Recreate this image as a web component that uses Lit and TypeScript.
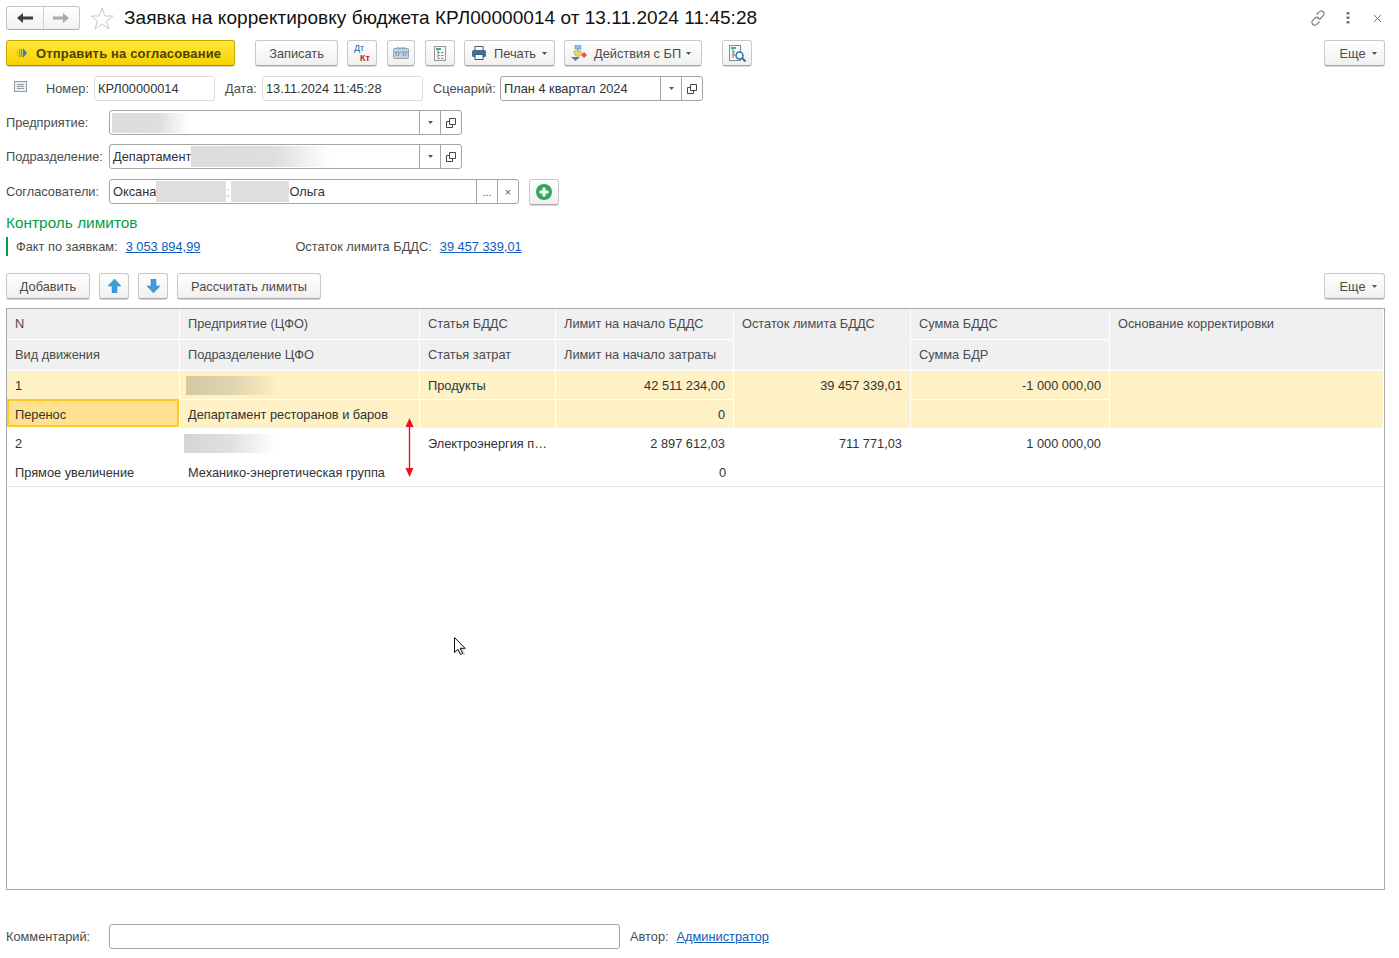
import { LitElement, css, html, svg } from "lit";
import { customElement } from "lit/decorators.js";

const dropArrow = svg`<svg class="caret" width="5" height="3" viewBox="0 0 5 3"><path d="M0 0h5L2.500 3z" fill="#555"/></svg>`;

const openIcon = html`<svg width="10" height="10" viewBox="0 0 10 10" fill="none" stroke="#444"><path d="M3.500.5h6v6h-6z"/><path d="M3.500 3.500H.5v6h6V6.500"/></svg>`;

const arrowBlue = (down: boolean) => html`<svg width="13" height="14" viewBox="0 0 13 14"><path d=${down ? "M4 0h5v7h4l-6.500 7L0 7h4z" : "M6.500 0 13 7H9v7H4V7H0z"} fill="#3f9ddb" stroke="#2b85c4" stroke-width=".5"/></svg>`;

@customElement("app-root")
export class AppRoot extends LitElement {
  static styles = css`
    :host {
      display: block;
      width: 1399px;
      height: 958px;
      position: relative;
      overflow: hidden;
      background: #fff;
      font: 12.8px "Liberation Sans", Arial, sans-serif;
      color: #333;
    }
    .page {
      display: flex;
      flex-direction: column;
      padding: 6px 14px 0 6px;
    }
    .row {
      display: flex;
      align-items: center;
    }
    .title-row {
      height: 24px;
    }
    .nav {
      display: flex;
      width: 74px;
      height: 24px;
      box-sizing: border-box;
      border: 1px solid #c6c6c6;
      border-bottom-color: #aaa;
      border-radius: 3px;
      background: linear-gradient(#fff, #f1f1f1);
    }
    .nav div {
      flex: 1;
      display: flex;
      align-items: center;
      justify-content: center;
    }
    .nav div + div {
      border-left: 1px solid #d0d0d0;
    }
    .star {
      margin-left: 10px;
    }
    h1 {
      margin: 0 0 0 10px;
      font-size: 19px;
      font-weight: 400;
      letter-spacing: 0.05px;
      color: #111;
      white-space: nowrap;
    }
    .top-icons {
      margin-left: auto;
      display: flex;
      align-items: center;
      padding-right: 3px;
    }
    .kebab {
      margin-left: 20px;
    }
    .close {
      margin-left: 23px;
    }
    .btn {
      height: 26px;
      box-sizing: border-box;
      display: flex;
      align-items: center;
      justify-content: center;
      border: 1px solid #c8c8c8;
      border-bottom-color: #a8a8a8;
      border-radius: 3px;
      background: linear-gradient(#fff, #f0f0f0);
      box-shadow: 0 1px 0 #d8d8d8;
      color: #4b4b4b;
      white-space: nowrap;
    }
    .caret {
      margin-left: 6px;
    }
    .primary {
      width: 229px;
      justify-content: flex-start;
      padding-left: 10px;
      background: linear-gradient(#ffe73c, #f8d200);
      border-color: #c8a800;
      border-bottom-color: #a88c00;
      color: #4d4300;
      font-size: 13px;
      font-weight: 700;
      letter-spacing: 0.16px;
      gap: 9px;
    }
    .toolbar {
      margin-top: 10px;
    }
    .save {
      width: 83px;
      margin-left: 20px;
    }
    .ic30 {
      width: 30px;
    }
    .ic28 {
      width: 28px;
    }
    .ml9 {
      margin-left: 9px;
    }
    .ml10 {
      margin-left: 10px;
    }
    .print {
      width: 91px;
      gap: 8px;
    }
    .actions {
      width: 138px;
      justify-content: flex-start;
      padding-left: 6px;
      gap: 7px;
    }
    .print .caret,
    .actions .caret {
      margin-left: -2px;
    }
    .ml20 {
      margin-left: 20px;
    }
    .more {
      width: 61px;
      margin-left: auto;
      padding-left: 7px;
    }
    .dtkt {
      display: block;
      position: relative;
      width: 16px;
      height: 20px;
      font-size: 9px;
    }
    .dt {
      position: absolute;
      left: 0;
      top: 0;
      color: #1c5fb0;
    }
    .kt {
      position: absolute;
      right: 0;
      bottom: 0;
      color: #c8141e;
      font-weight: 700;
    }
    .label {
      color: #4b4b4b;
      white-space: nowrap;
    }
    .field {
      height: 25px;
      box-sizing: border-box;
      display: flex;
      align-items: center;
      border: 1px solid #a5a5a5;
      border-radius: 3px;
      background: #fff;
      white-space: nowrap;
      overflow: hidden;
    }
    .soft {
      border-color: #dcdcdc;
    }
    .value {
      flex: 1;
      display: flex;
      align-items: center;
      padding-left: 3px;
      min-width: 0;
      height: 100%;
    }
    .side {
      width: 21px;
      height: 100%;
      box-sizing: border-box;
      display: flex;
      align-items: center;
      justify-content: center;
      border-left: 1px solid #a5a5a5;
      color: #555;
      font-size: 11px;
    }
    .side .caret {
      margin-left: 0;
    }
    .doc-icon {
      margin-left: 8px;
      margin-top: -5px;
      margin-right: 19px;
    }
    .num-label {
      width: 48px;
    }
    .num {
      width: 121px;
    }
    .date-label {
      width: 37px;
      margin-left: 10px;
    }
    .date {
      width: 161px;
    }
    .scen-label {
      width: 67px;
      margin-left: 10px;
    }
    .scen {
      width: 203px;
    }
    .form-row {
      margin-top: 9px;
    }
    .form-row .label {
      width: 103px;
    }
    .people-row {
      margin-top: 10px;
      align-items: flex-start;
    }
    .people-row .label {
      width: 103px;
      line-height: 25px;
    }
    .wide {
      width: 353px;
    }
    .people {
      width: 410px;
    }
    .add-person {
      width: 30px;
      margin-left: 10px;
    }
    .blur {
      display: inline-block;
      height: 20px;
      background: linear-gradient(90deg, #dcdcdc 0, #dedede 60%, rgba(222, 222, 222, 0) 100%);
    }
    .b-ent {
      width: 78px;
      margin-left: -1px;
    }
    .b-dep {
      width: 140px;
      height: 21px;
    }
    .b-solid {
      height: 21px;
      background: #dedede;
    }
    .b-a {
      width: 70px;
    }
    .semi {
      width: 5px;
      color: #e8b080;
    }
    .b-b {
      width: 58px;
    }
    .heading {
      margin-top: 8px;
      height: 19px;
      line-height: 19px;
      font-size: 15.4px;
      color: #00a04b;
    }
    .facts {
      margin-top: 5px;
      height: 19px;
      border-left: 2px solid #00a04b;
      padding-left: 8px;
    }
    a {
      color: #0f5cb8;
      text-decoration: underline;
    }
    .facts a {
      margin-left: 8px;
    }
    .fact-b {
      margin-left: 95px;
    }
    .actions-row {
      margin-top: 17px;
    }
    .add {
      width: 84px;
    }
    .calc {
      width: 144px;
      margin-left: 9px;
    }
    .table {
      margin-top: 9px;
      height: 582px;
      box-sizing: border-box;
      border: 1px solid #a8a8a8;
      display: grid;
      grid-template-columns: 173px 240px 136px 178px 177px 199px 274px;
      grid-template-rows: 31px 31px 29px 29px 29px 29px;
      align-content: start;
    }
    .c {
      box-sizing: border-box;
      padding: 0 8px;
      display: flex;
      align-items: center;
      white-space: nowrap;
      overflow: hidden;
      min-width: 0;
      border-right: 1px solid #fff;
      border-bottom: 1px solid #fff;
    }
    .h {
      background: #f0f0f0;
      color: #4b4b4b;
      padding-bottom: 1px;
    }
    .tall {
      grid-row: span 2;
      align-items: flex-start;
      padding-top: 7px;
    }
    .hl {
      background: #fdf1c5;
    }
    .r {
      justify-content: flex-end;
    }
    .sel {
      background: #fee28f;
      border: 2px solid #fbc82b;
      padding: 2px 0 0 6px;
      width: 172px;
      height: 28px;
      margin-top: -1px;
    }
    .last {
      border-bottom: 1px solid #e2e2e2;
      border-right: 0;
    }
    .ell {
      display: block;
      line-height: 29px;
    }
    .cell-blur {
      height: 19px;
      width: 92px;
      margin-left: -2px;
      background: linear-gradient(90deg, rgba(0, 0, 0, 0.17) 0, rgba(0, 0, 0, 0.12) 50%, rgba(0, 0, 0, 0) 100%);
    }
    .cell-blur.second {
      margin-left: -4px;
    }
    .comment-row {
      margin-top: 34px;
    }
    .comment-row .label:first-child {
      width: 103px;
    }
    .comment {
      width: 511px;
    }
    .author {
      margin-left: 10px;
    }
    .comment-row a {
      margin-left: 8px;
    }
    .red-arrow {
      position: absolute;
      left: 405px;
      top: 418px;
    }
    .cursor {
      position: absolute;
      left: 453px;
      top: 636px;
    }
  `;

  render() {
    return html`
      <div class="page">
        <div class="row title-row">
          <div class="nav">
            <div>
              <svg width="16" height="12" viewBox="0 0 16 12"><path d="M0 6l6-5v3.500h10v3H6V11z" fill="#3c3c3c"/></svg>
            </div>
            <div>
              <svg width="16" height="12" viewBox="0 0 16 12"><path d="M16 6l-6-5v3.500H0v3h10V11z" fill="#aaa"/></svg>
            </div>
          </div>
          <svg class="star" width="24" height="23" viewBox="0 0 24 23"><path d="M12 1l3 8h8l-6.500 5 2.500 8-7-5-7 5 2.500-8L1 9h8z" fill="#fff" stroke="#c9c9c9"/></svg>
          <h1>Заявка на корректировку бюджета КРЛ00000014 от 13.11.2024 11:45:28</h1>
          <div class="top-icons">
            <svg width="16" height="16" viewBox="0 0 16 16" fill="none" stroke="#777" stroke-width="1.100"><path d="M6.500 4.500 9 2a2.800 2.800 0 0 1 4.500 3.500L11 8a2.800 2.800 0 0 1-3.800.2"/><path d="M9.500 11.500 7 14a2.800 2.800 0 0 1-4.500-3.500L5 8a2.800 2.800 0 0 1 3.800-.2"/></svg>
            <svg class="kebab" width="4" height="12" viewBox="0 0 4 12" fill="#777"><rect x="0.500" width="3" height="2.500"/><rect x="0.500" y="4.500" width="3" height="2.500"/><rect x="0.500" y="9" width="3" height="2.500"/></svg>
            <svg class="close" width="9" height="9" viewBox="0 0 9 9" stroke="#777" fill="none"><path d="M1 1l7 7M8 1 1 8"/></svg>
          </div>
        </div>

        <div class="row toolbar">
          <div class="btn primary">
            <svg width="10" height="10" viewBox="0 0 10 10"><path d="M0 2h1v6H0z" fill="#8dbde6"/><path d="M2 1h1.200v8H2z" fill="#5a9fd8"/><path d="M4 1h1.200v8H4z" fill="#3f8fd0"/><path d="M6 0l4 5-4 5z" fill="#2f7fc4"/></svg>
            <span>Отправить на согласование</span>
          </div>
          <div class="btn save">Записать</div>
          <div class="btn ic30 ml9"><span class="dtkt"><span class="dt">Дт</span><span class="kt">Кт</span></span></div>
          <div class="btn ic28 ml10">
            <svg width="16" height="12" viewBox="0 0 16 12"><rect x="0.500" y="1.500" width="15" height="10" rx="1" fill="#bcd3e6" stroke="#8fa6b9"/><path d="M1 5h14" stroke="#8fa6b9"/><path d="M4.500 1V0h7v1" fill="none" stroke="#8fa6b9"/><circle cx="4.500" cy="7" r="1.500" fill="#eef4f9" stroke="#6c8499"/><circle cx="11.500" cy="7" r="1.500" fill="#eef4f9" stroke="#6c8499"/></svg>
          </div>
          <div class="btn ic30 ml10">
            <svg width="12" height="15" viewBox="0 0 12 15"><rect x="0.500" y="0.500" width="11" height="14" fill="#f7f7f7" stroke="#999"/><rect x="2" y="2" width="5" height="2" fill="#48a89a"/><path d="M4 4v8.500M4 6.500h2M4 9.500h2M4 12.500h2M7 6.500h2.500M7 9.500h2.500M7 12.500h2.500" stroke="#8c8c8c"/></svg>
          </div>
          <div class="btn print ml9">
            <svg width="14" height="14" viewBox="0 0 14 14"><rect x="3" y="0.500" width="8" height="4" fill="#fff" stroke="#555"/><rect x="0" y="4" width="14" height="7" rx="1.500" fill="#3f6f96"/><rect x="3" y="8.500" width="8" height="5" fill="#fff" stroke="#2f5c82"/></svg>
            <span>Печать</span>${dropArrow}
          </div>
          <div class="btn actions ml9">
            <svg width="16" height="17" viewBox="0 0 16 17"><rect x="4" y="0" width="6" height="4" fill="#8ec0e8" stroke="#5a8fc0" stroke-width=".6"/><path d="M7 4v3" stroke="#777"/><path d="M3 6h7l1 3-4.500 3L3 9z" fill="#f3d46a" stroke="#b99a2e" stroke-width=".6"/><path d="M10 10l3-3 3 3-3 3z" fill="#e8582c"/><path d="M0 12h9l-4.500 4z" fill="#4e7ea8"/></svg>
            <span>Действия с БП</span>${dropArrow}
          </div>
          <div class="btn ic30 ml20">
            <svg width="17" height="17" viewBox="0 0 17 17" fill="none"><rect x="0.500" y="0.500" width="11" height="15" fill="#f7f7f7" stroke="#8a8a8a"/><rect x="2" y="2" width="5" height="2" fill="#48a89a"/><path d="M4 4v9M4 7h2M4 10h2" stroke="#777"/><circle cx="10.500" cy="10.500" r="3.500" fill="#fff" stroke="#2a72b5" stroke-width="1.500"/><path d="M13 13l3.500 3.500" stroke="#2a72b5" stroke-width="2"/></svg>
          </div>
          <div class="btn more">Еще${dropArrow}</div>
        </div>

        <div class="row toolbar">
          <svg class="doc-icon" width="13" height="11" viewBox="0 0 13 11" fill="none" stroke="#8e9aa6"><rect x="0.500" y="0.500" width="12" height="10" fill="#eef1f4"/><path d="M3 3.500h7M3 5.500h7M3 7.500h7"/></svg>
          <span class="label num-label">Номер:</span>
          <div class="field soft num"><div class="value">КРЛ00000014</div></div>
          <span class="label date-label">Дата:</span>
          <div class="field soft date"><div class="value">13.11.2024 11:45:28</div></div>
          <span class="label scen-label">Сценарий:</span>
          <div class="field scen">
            <div class="value">План 4 квартал 2024</div>
            <div class="side">${dropArrow}</div>
            <div class="side">${openIcon}</div>
          </div>
        </div>

        <div class="row form-row">
          <span class="label">Предприятие:</span>
          <div class="field wide">
            <div class="value"><span class="blur b-ent"></span></div>
            <div class="side">${dropArrow}</div>
            <div class="side">${openIcon}</div>
          </div>
        </div>

        <div class="row form-row">
          <span class="label">Подразделение:</span>
          <div class="field wide">
            <div class="value">Департамент<span class="blur b-dep"></span></div>
            <div class="side">${dropArrow}</div>
            <div class="side">${openIcon}</div>
          </div>
        </div>

        <div class="row people-row">
          <span class="label">Согласователи:</span>
          <div class="field people">
            <div class="value">Оксана<span class="blur b-solid b-a"></span><span class="semi">;</span><span class="blur b-solid b-b"></span>Ольга</div>
            <div class="side">...</div>
            <div class="side">×</div>
          </div>
          <div class="btn add-person">
            <svg width="16" height="16" viewBox="0 0 16 16"><circle cx="8" cy="8" r="8" fill="#2fa84f"/><path d="M6.500 3.500h3v3h3v3h-3v3h-3v-3h-3v-3h3z" fill="#fff"/></svg>
          </div>
        </div>

        <div class="heading">Контроль лимитов</div>
        <div class="row facts">
          <span class="label">Факт по заявкам:</span><a>3 053 894,99</a>
          <span class="label fact-b">Остаток лимита БДДС:</span><a>39 457 339,01</a>
        </div>

        <div class="row actions-row">
          <div class="btn add">Добавить</div>
          <div class="btn ic30 ml9">${arrowBlue(false)}</div>
          <div class="btn ic30 ml9">${arrowBlue(true)}</div>
          <div class="btn calc">Рассчитать лимиты</div>
          <div class="btn more">Еще${dropArrow}</div>
        </div>

        <div class="table">
          <div class="c h">N</div>
          <div class="c h">Предприятие (ЦФО)</div>
          <div class="c h">Статья БДДС</div>
          <div class="c h">Лимит на начало БДДС</div>
          <div class="c h tall">Остаток лимита БДДС</div>
          <div class="c h">Сумма БДДС</div>
          <div class="c h tall">Основание корректировки</div>
          <div class="c h">Вид движения</div>
          <div class="c h">Подразделение ЦФО</div>
          <div class="c h">Статья затрат</div>
          <div class="c h">Лимит на начало затраты</div>
          <div class="c h">Сумма БДР</div>

          <div class="c hl">1</div>
          <div class="c hl"><span class="cell-blur"></span></div>
          <div class="c hl">Продукты</div>
          <div class="c hl r">42 511 234,00</div>
          <div class="c hl r tall">39 457 339,01</div>
          <div class="c hl r">-1 000 000,00</div>
          <div class="c hl tall"></div>
          <div class="c sel">Перенос</div>
          <div class="c hl">Департамент ресторанов и баров</div>
          <div class="c hl"></div>
          <div class="c hl r">0</div>
          <div class="c hl"></div>

          <div class="c">2</div>
          <div class="c"><span class="cell-blur second"></span></div>
          <div class="c"><span class="ell">Электроэнергия п…</span></div>
          <div class="c r">2 897 612,03</div>
          <div class="c r">711 771,03</div>
          <div class="c r">1 000 000,00</div>
          <div class="c"></div>
          <div class="c last">Прямое увеличение</div>
          <div class="c last">Механико-энергетическая группа</div>
          <div class="c last"></div>
          <div class="c last r">0</div>
          <div class="c last"></div>
          <div class="c last"></div>
          <div class="c last"></div>
        </div>

        <div class="row comment-row">
          <span class="label">Комментарий:</span>
          <div class="field comment"></div>
          <span class="label author">Автор:</span><a>Администратор</a>
        </div>
      </div>

      <svg class="red-arrow" width="9" height="59" viewBox="0 0 9 59"><path d="M4.500 0 8.500 9H5.200v41h3.300l-4 9-4-9h3.300V9H.5z" fill="#e8141e"/></svg>
      <svg class="cursor" width="18" height="22" viewBox="0 0 18 22"><path d="M3.500 3.500 14 13l-4 .5 2.500 5-2 1-2.500-5-3 3z" fill="#bbb" opacity=".6"/><path d="M1.500 1.500v15l3.500-3.300 2.500 5.300 2.200-1-2.500-5.200h4.800z" fill="#fff" stroke="#111"/></svg>
    `;
  }
}
